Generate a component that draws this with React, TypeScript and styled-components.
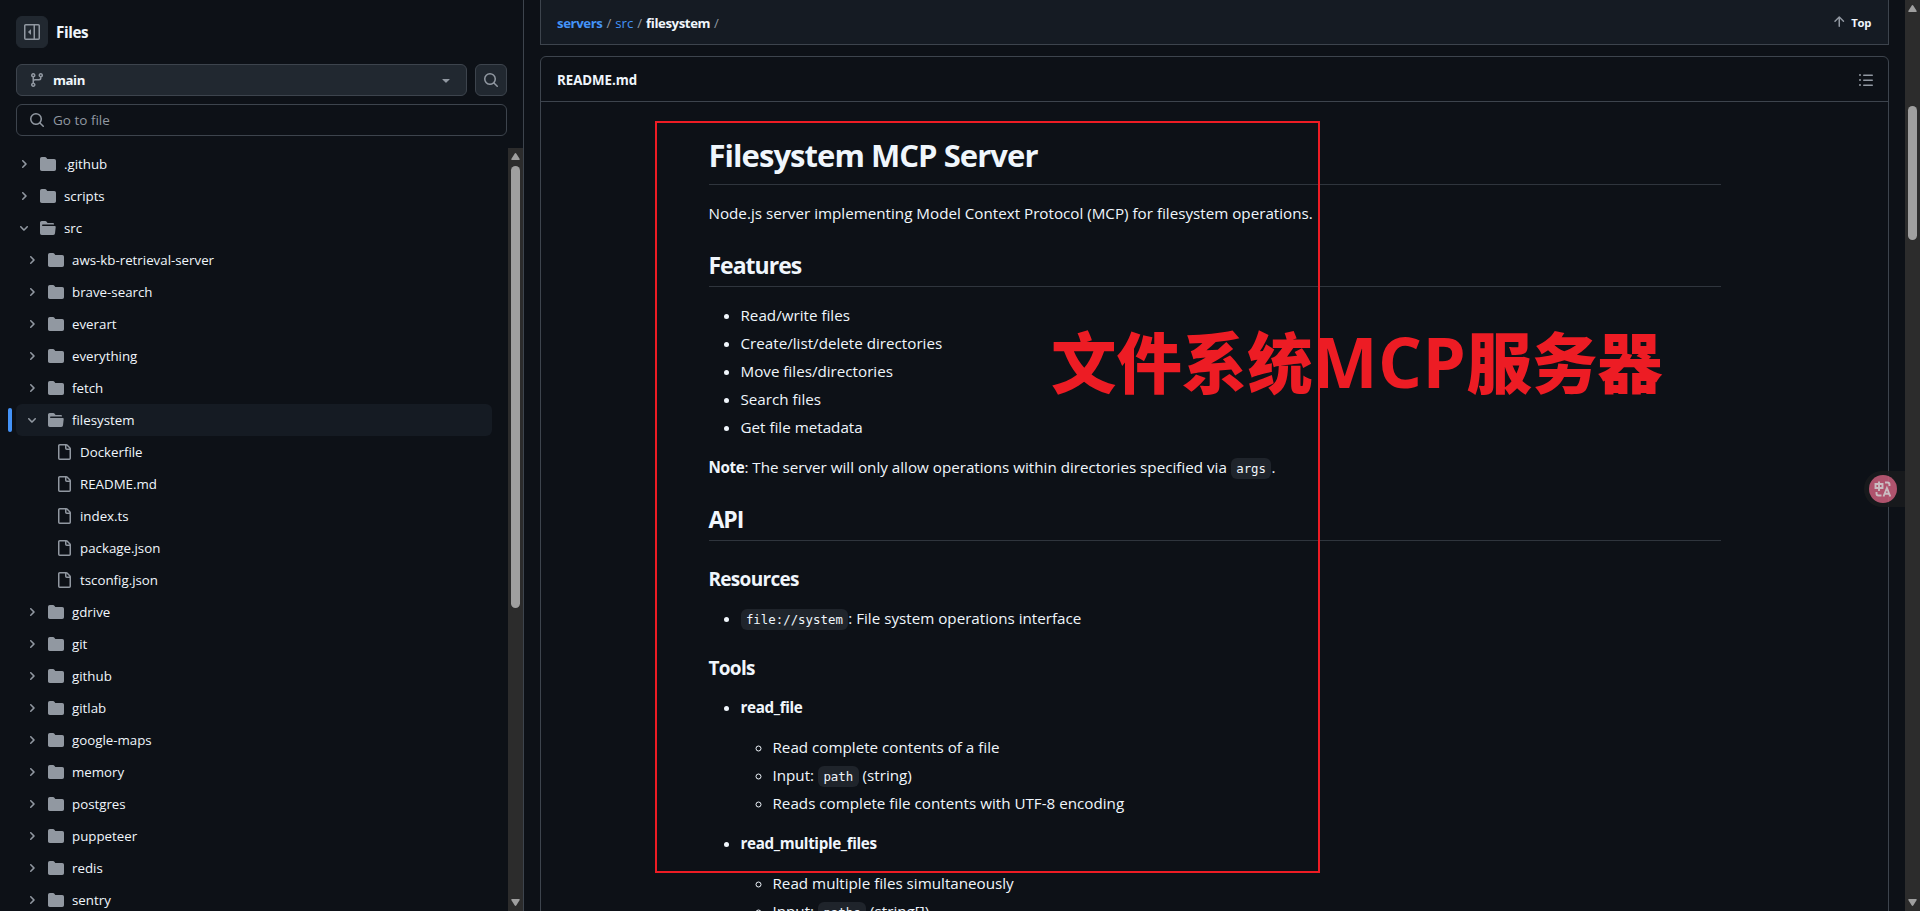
import React from "react";
import styled, { createGlobalStyle, css } from "styled-components";

const GlobalStyle = createGlobalStyle`
  * {
    box-sizing: border-box;
  }

  body {
    margin: 0;
    background-color: #0d1117;
    color: #f0f6fc;
    font-family: "Open Sans", "Noto Sans", sans-serif;
    overflow: hidden;
  }

  svg {
    display: block;
    flex-shrink: 0;
    fill: #9198a1;
  }
`;

const Page = styled.div`
  display: flex;
  height: 911px;
  overflow: hidden;
`;

const Sidebar = styled.aside`
  width: 524px;
  flex-shrink: 0;
  display: flex;
  flex-direction: column;
  border-right: 1px solid #3d444d;
`;

const SidebarTop = styled.div`
  padding: 16px 16px 12px;
  display: flex;
  flex-direction: column;
  gap: 8px;
`;

const TitleRow = styled.div`
  display: flex;
  align-items: center;
  gap: 8px;
  margin-bottom: 8px;
`;

const IconButton = styled.button<{ $outlined?: boolean }>`
  width: 32px;
  height: 32px;
  padding: 0;
  display: flex;
  align-items: center;
  justify-content: center;
  flex-shrink: 0;
  border: 1px solid ${({ $outlined }) => ($outlined ? "#3d444d" : "#212830")};
  border-radius: 6px;
  background-color: #212830;
`;

const SidebarTitle = styled.h2`
  margin: 0;
  font-size: 15.2px;
  font-weight: 700;
  letter-spacing: -0.4px;
`;

const BranchRow = styled.div`
  display: flex;
  gap: 8px;
`;

const BranchButton = styled.button`
  flex: 1;
  height: 32px;
  padding: 0 12px;
  display: flex;
  align-items: center;
  gap: 8px;
  border: 1px solid #3d444d;
  border-radius: 6px;
  background-color: #212830;
  color: #f0f6fc;
  font: 700 13.2px "Open Sans", sans-serif;
  letter-spacing: -0.4px;

  & > span {
    flex: 1;
    text-align: left;
  }
`;

const SearchBox = styled.div`
  height: 32px;
  padding: 0 12px;
  display: flex;
  align-items: center;
  gap: 8px;
  border: 1px solid #3d444d;
  border-radius: 6px;
  color: #9198a1;
  font-size: 13.5px;
`;

const TreeArea = styled.div`
  flex: 1;
  min-height: 0;
  display: flex;
`;

const Tree = styled.div`
  flex: 1;
  padding: 0 16px;
  overflow: hidden;
`;

const TreeRow = styled.div<{ $level: number; $active?: boolean }>`
  position: relative;
  height: 32px;
  padding-left: ${({ $level }) => $level * 8}px;
  display: flex;
  align-items: center;
  border-radius: 6px;
  font-size: 13.3px;
  font-weight: 500;
  white-space: nowrap;

  ${({ $active }) =>
    $active &&
    css`
      background-color: #151b23;

      &::before {
        content: "";
        position: absolute;
        top: 4px;
        left: -8px;
        width: 4px;
        height: 24px;
        border-radius: 6px;
        background-color: #4493f8;
      }
    `}
`;

const Toggle = styled.span`
  width: 16px;
  margin-right: 8px;
  display: flex;
  justify-content: center;
`;

const TreeLabel = styled.span`
  margin-left: 8px;
`;

const ScrollTrack = styled.div`
  width: 15px;
  flex-shrink: 0;
  display: flex;
  flex-direction: column;
  align-items: center;
  padding: 4px 0;
  background-color: #2c2c2c;

  & > svg {
    fill: #9f9f9f;
  }
`;

const ScrollThumb = styled.div<{ $offset: number; $length: number }>`
  width: 9px;
  height: ${({ $length }) => $length}px;
  margin-top: ${({ $offset }) => $offset}px;
  margin-bottom: auto;
  border-radius: 5px;
  background-color: #9f9f9f;
`;

const Main = styled.main`
  flex: 1;
  min-width: 0;
  padding: 0 16px;
`;

const PathBar = styled.div`
  height: 45px;
  padding: 0 17px 0 16px;
  display: flex;
  align-items: center;
  justify-content: space-between;
  border: 1px solid #3d444d;
  border-top: 0;
  background-color: #151b23;
`;

const Breadcrumb = styled.nav`
  display: flex;
  gap: 4px;
  padding-top: 2px;
  font-size: 13.2px;
  color: #9198a1;

  & > a {
    color: #4493f8;
  }

  & > a:first-child,
  & > strong {
    font-weight: 700;
    letter-spacing: -0.4px;
  }

  & > strong {
    color: #f0f6fc;
  }
`;

const TopLink = styled.div`
  display: flex;
  align-items: center;
  gap: 4px;
  font-size: 11.3px;
  font-weight: 700;
  letter-spacing: -0.3px;
`;

const ReadmeBox = styled.section`
  height: 900px;
  margin-top: 11px;
  border: 1px solid #3d444d;
  border-radius: 6px;
`;

const ReadmeHeader = styled.div`
  height: 45px;
  padding: 1px 14px 0 16px;
  display: flex;
  align-items: center;
  justify-content: space-between;
  border-bottom: 1px solid #3d444d;
  font-size: 13.3px;
  font-weight: 700;
  letter-spacing: -0.05px;
`;

const Article = styled.article`
  max-width: 1012px;
  margin: 0 auto;
  padding-top: 32px;
  font-size: 15.2px;
  line-height: 24px;

  h1,
  h2,
  h3 {
    margin: 24px 0 16px;
    font-weight: 700;
  }

  h1 {
    margin-top: 0;
    padding: 1px 0 8.6px;
    border-bottom: 1px solid #2f353d;
    font-size: 31px;
    line-height: 40px;
    letter-spacing: -0.95px;
  }

  h2 {
    padding: 1px 0 6.2px;
    border-bottom: 1px solid #2f353d;
    font-size: 23px;
    line-height: 30px;
    letter-spacing: -1px;
  }

  h3 {
    margin-bottom: 14px;
    padding-top: 2px;
    font-size: 19px;
    line-height: 25px;
    letter-spacing: -0.7px;
  }

  p {
    margin: 0 0 16px;
  }

  strong {
    font-weight: 700;
    letter-spacing: -0.35px;
  }

  ul {
    margin: 0 0 16px;
    padding-left: 32px;
  }

  li + li {
    margin-top: 4px;
  }

  li > p {
    margin-top: 16px;
  }

  li:first-child > p {
    margin-top: 0;
  }
`;

const Code = styled.code`
  padding: 3.2px 5.4px;
  border-radius: 6px;
  background-color: #1f242b;
  font-family: "DejaVu Sans Mono", monospace;
  font-size: 12.4px;
  line-height: 1;
`;

const Highlight = styled.div`
  position: absolute;
  top: 121px;
  left: 655px;
  width: 665px;
  height: 752px;
  border: 2px solid #ed1c24;
`;

const Caption = styled.div`
  position: absolute;
  top: 312px;
  left: 1051px;
  display: flex;
  align-items: baseline;
  color: #ed1c24;
  font: 900 65.4px/96px "Noto Sans CJK SC", sans-serif;
  white-space: nowrap;

  & > span {
    width: 154px;
    font: 700 69px/96px "Open Sans", sans-serif;
    letter-spacing: 0.5px;
  }
`;

const TranslateTab = styled.div`
  position: absolute;
  top: 471px;
  left: 1864px;
  width: 41px;
  height: 36px;
  padding: 4px 5px;
  border-radius: 18px 0 0 18px;
  background-color: #191b1d;
  opacity: 0.88;
`;

const TranslateBadge = styled.div`
  width: 28px;
  height: 28px;
  display: flex;
  align-items: center;
  justify-content: center;
  border-radius: 50%;
  background-color: #c65d79;
`;

interface OcticonProps {
  d: string;
  size?: number;
}

function Octicon({ d, size = 16 }: OcticonProps) {
  return (
    <svg width={size} height={size} viewBox="0 0 16 16">
      <path d={d} />
    </svg>
  );
}

const icons = {
  sidebar:
    "m4.177 7.823 2.396-2.396A.25.25 0 0 1 7 5.604v4.792a.25.25 0 0 1-.427.177L4.177 8.177a.25.25 0 0 1 0-.354Z M0 1.75C0 .784.784 0 1.75 0h12.5C15.216 0 16 .784 16 1.75v12.5A1.75 1.75 0 0 1 14.25 16H1.75A1.75 1.75 0 0 1 0 14.25Zm1.75-.25a.25.25 0 0 0-.25.25v12.5c0 .138.112.25.25.25H9.5v-13Zm12.5 13a.25.25 0 0 0 .25-.25V1.75a.25.25 0 0 0-.25-.25H11v13Z",
  branch:
    "M9.5 3.25a2.25 2.25 0 1 1 3 2.122V6A2.5 2.5 0 0 1 10 8.5H6a1 1 0 0 0-1 1v1.128a2.251 2.251 0 1 1-1.5 0V5.372a2.25 2.25 0 1 1 1.5 0v1.836A2.493 2.493 0 0 1 6 7h4a1 1 0 0 0 1-1v-.628A2.25 2.25 0 0 1 9.5 3.25Zm-6 0a.75.75 0 1 0 1.5 0 .75.75 0 0 0-1.5 0Zm8.25-.75a.75.75 0 1 0 0 1.5.75.75 0 0 0 0-1.5ZM4.25 12a.75.75 0 1 0 0 1.5.75.75 0 0 0 0-1.5Z",
  caret: "m4.427 7.427 3.396 3.396a.25.25 0 0 0 .354 0l3.396-3.396A.25.25 0 0 0 11.396 7H4.604a.25.25 0 0 0-.177.427Z",
  search:
    "M10.68 11.74a6 6 0 0 1-7.922-8.982 6 6 0 0 1 8.982 7.922l3.04 3.04a.749.749 0 0 1-.326 1.275.749.749 0 0 1-.734-.215ZM11.5 7a4.499 4.499 0 1 0-8.997 0A4.499 4.499 0 0 0 11.5 7Z",
  folder:
    "M1.75 1A1.75 1.75 0 0 0 0 2.75v10.5C0 14.216.784 15 1.75 15h12.5A1.75 1.75 0 0 0 16 13.25v-8.5A1.75 1.75 0 0 0 14.25 3H7.5a.25.25 0 0 1-.2-.1l-.9-1.2C6.07 1.26 5.55 1 5 1H1.75Z",
  folderOpen:
    "M.513 1.513A1.75 1.75 0 0 1 1.75 1h3.5c.55 0 1.07.26 1.4.7l.9 1.2a.25.25 0 0 0 .2.1H13a1 1 0 0 1 1 1v.5H2.75a.75.75 0 0 0 0 1.5h11.978a1 1 0 0 1 .994 1.117L15 13.25A1.75 1.75 0 0 1 13.25 15H1.75A1.75 1.75 0 0 1 0 13.25V2.75c0-.464.184-.91.513-1.237Z",
  file: "M2 1.75C2 .784 2.784 0 3.75 0h6.586c.464 0 .909.184 1.237.513l2.914 2.914c.329.328.513.773.513 1.237v9.586A1.75 1.75 0 0 1 13.25 16h-9.5A1.75 1.75 0 0 1 2 14.25Zm1.75-.25a.25.25 0 0 0-.25.25v12.5c0 .138.112.25.25.25h9.5a.25.25 0 0 0 .25-.25V6h-2.75A1.75 1.75 0 0 1 9 4.25V1.5Zm6.75.062V4.25c0 .138.112.25.25.25h2.688l-.011-.013-2.914-2.914-.013-.011Z",
  arrowUp:
    "M3.47 7.78a.75.75 0 0 1 0-1.06l4.25-4.25a.75.75 0 0 1 1.06 0l4.25 4.25a.751.751 0 0 1-.018 1.042.751.751 0 0 1-1.042.018L9 4.81v7.44a.75.75 0 0 1-1.5 0V4.81L4.53 7.78a.75.75 0 0 1-1.06 0Z",
  list: "M5.75 2.5h8.5a.75.75 0 0 1 0 1.5h-8.5a.75.75 0 0 1 0-1.5Zm0 5h8.5a.75.75 0 0 1 0 1.5h-8.5a.75.75 0 0 1 0-1.5Zm0 5h8.5a.75.75 0 0 1 0 1.5h-8.5a.75.75 0 0 1 0-1.5ZM2 14a1 1 0 1 1 0-2 1 1 0 0 1 0 2Zm1-6a1 1 0 1 1-2 0 1 1 0 0 1 2 0ZM2 4a1 1 0 1 1 0-2 1 1 0 0 1 0 2Z",
};

const chevrons = {
  right:
    "M4.7 10c-.2 0-.4-.1-.5-.2-.3-.3-.3-.8 0-1.1L6.9 6 4.2 3.3c-.3-.3-.3-.8 0-1.1.3-.3.8-.3 1.1 0l3.3 3.2c.3.3.3.8 0 1.1L5.3 9.7c-.2.2-.4.3-.6.3Z",
  down: "M6 8.825c-.2 0-.4-.1-.5-.2l-3.3-3.3c-.3-.3-.3-.8 0-1.1.3-.3.8-.3 1.1 0l2.7 2.7 2.7-2.7c.3-.3.8-.3 1.1 0 .3.3.3.8 0 1.1l-3.2 3.2c-.2.2-.4.3-.6.3Z",
};

function Chevron({ open }: { open?: boolean }) {
  return (
    <svg width="12" height="12" viewBox="0 0 12 12">
      <path d={open ? chevrons.down : chevrons.right} />
    </svg>
  );
}

interface ScrollbarProps {
  offset: number;
  length: number;
}

function Scrollbar({ offset, length }: ScrollbarProps) {
  return (
    <ScrollTrack>
      <svg width="9" height="9" viewBox="0 0 9 9">
        <path d="M4.5 1 Q5 1 5.4 1.7 L8.7 7 Q9 8 8 8 H1 Q0 8 .3 7 L3.6 1.7 Q4 1 4.5 1Z" />
      </svg>
      <ScrollThumb $offset={offset} $length={length} />
      <svg width="9" height="9" viewBox="0 0 9 9">
        <path d="M4.5 8 Q5 8 5.4 7.3 L8.7 2 Q9 1 8 1 H1 Q0 1 .3 2 L3.6 7.3 Q4 8 4.5 8Z" />
      </svg>
    </ScrollTrack>
  );
}

interface TreeItem {
  name: string;
  level: number;
  kind?: "open" | "file";
  active?: boolean;
}

const treeItems: TreeItem[] = [
  { name: ".github", level: 0 },
  { name: "scripts", level: 0 },
  { name: "src", level: 0, kind: "open" },
  { name: "aws-kb-retrieval-server", level: 1 },
  { name: "brave-search", level: 1 },
  { name: "everart", level: 1 },
  { name: "everything", level: 1 },
  { name: "fetch", level: 1 },
  { name: "filesystem", level: 1, kind: "open", active: true },
  { name: "Dockerfile", level: 2, kind: "file" },
  { name: "README.md", level: 2, kind: "file" },
  { name: "index.ts", level: 2, kind: "file" },
  { name: "package.json", level: 2, kind: "file" },
  { name: "tsconfig.json", level: 2, kind: "file" },
  { name: "gdrive", level: 1 },
  { name: "git", level: 1 },
  { name: "github", level: 1 },
  { name: "gitlab", level: 1 },
  { name: "google-maps", level: 1 },
  { name: "memory", level: 1 },
  { name: "postgres", level: 1 },
  { name: "puppeteer", level: 1 },
  { name: "redis", level: 1 },
  { name: "sentry", level: 1 },
];

function treeIcon(kind?: TreeItem["kind"]): string {
  if (kind === "file") return icons.file;
  return kind === "open" ? icons.folderOpen : icons.folder;
}

function FileTree() {
  return (
    <Tree>
      {treeItems.map(({ name, level, kind, active }) => (
        <TreeRow key={name} $level={level} $active={active}>
          <Toggle>{kind !== "file" && <Chevron open={kind === "open"} />}</Toggle>
          <Octicon d={treeIcon(kind)} />
          <TreeLabel>{name}</TreeLabel>
        </TreeRow>
      ))}
    </Tree>
  );
}

function Readme() {
  return (
    <Article>
      <h1>Filesystem MCP Server</h1>
      <p>
        Node.js server implementing Model Context Protocol (MCP) for filesystem
        operations.
      </p>
      <h2>Features</h2>
      <ul>
        <li>Read/write files</li>
        <li>Create/list/delete directories</li>
        <li>Move files/directories</li>
        <li>Search files</li>
        <li>Get file metadata</li>
      </ul>
      <p>
        <strong>Note</strong>: The server will only allow operations within
        directories specified via <Code>args</Code>.
      </p>
      <h2>API</h2>
      <h3>Resources</h3>
      <ul>
        <li>
          <Code>file://system</Code>: File system operations interface
        </li>
      </ul>
      <h3>Tools</h3>
      <ul>
        <li>
          <p>
            <strong>read_file</strong>
          </p>
          <ul>
            <li>Read complete contents of a file</li>
            <li>
              Input: <Code>path</Code> (string)
            </li>
            <li>Reads complete file contents with UTF-8 encoding</li>
          </ul>
        </li>
        <li>
          <p>
            <strong>read_multiple_files</strong>
          </p>
          <ul>
            <li>Read multiple files simultaneously</li>
            <li>
              Input: <Code>paths</Code> (string[])
            </li>
          </ul>
        </li>
      </ul>
    </Article>
  );
}

export default function App() {
  return (
    <>
      <GlobalStyle />
      <Page>
        <Sidebar>
          <SidebarTop>
            <TitleRow>
              <IconButton>
                <Octicon d={icons.sidebar} />
              </IconButton>
              <SidebarTitle>Files</SidebarTitle>
            </TitleRow>
            <BranchRow>
              <BranchButton>
                <Octicon d={icons.branch} />
                <span>main</span>
                <Octicon d={icons.caret} />
              </BranchButton>
              <IconButton $outlined>
                <Octicon d={icons.search} />
              </IconButton>
            </BranchRow>
            <SearchBox>
              <Octicon d={icons.search} />
              Go to file
            </SearchBox>
          </SidebarTop>
          <TreeArea>
            <FileTree />
            <Scrollbar offset={5} length={442} />
          </TreeArea>
        </Sidebar>

        <Main>
          <PathBar>
            <Breadcrumb>
              <a>servers</a>
              <span>/</span>
              <a>src</a>
              <span>/</span>
              <strong>filesystem</strong>
              <span>/</span>
            </Breadcrumb>
            <TopLink>
              <Octicon d={icons.arrowUp} />
              Top
            </TopLink>
          </PathBar>
          <ReadmeBox>
            <ReadmeHeader>
              README.md
              <Octicon d={icons.list} />
            </ReadmeHeader>
            <Readme />
          </ReadmeBox>
        </Main>

        <Scrollbar offset={93} length={134} />
      </Page>

      <Highlight />
      <Caption>
        文件系统<span>MCP</span>服务器
      </Caption>
      <TranslateTab>
        <TranslateBadge>
          <svg width="18" height="18" viewBox="0 0 18 18">
            <path
              fill="none"
              stroke="#e4d4d9"
              strokeWidth="1.9"
              d="M1.500 4h7v4h-7Z M5 1.500v9.500 M11 2.500h2.500a2 2 0 0 1 2 2v1.500 M2.500 12v1.500a2 2 0 0 0 2 2H7.500 M9.500 16.500l3.400-8.500 3.400 8.500 M10.800 13.700h4.300"
            />
          </svg>
        </TranslateBadge>
      </TranslateTab>
    </>
  );
}
